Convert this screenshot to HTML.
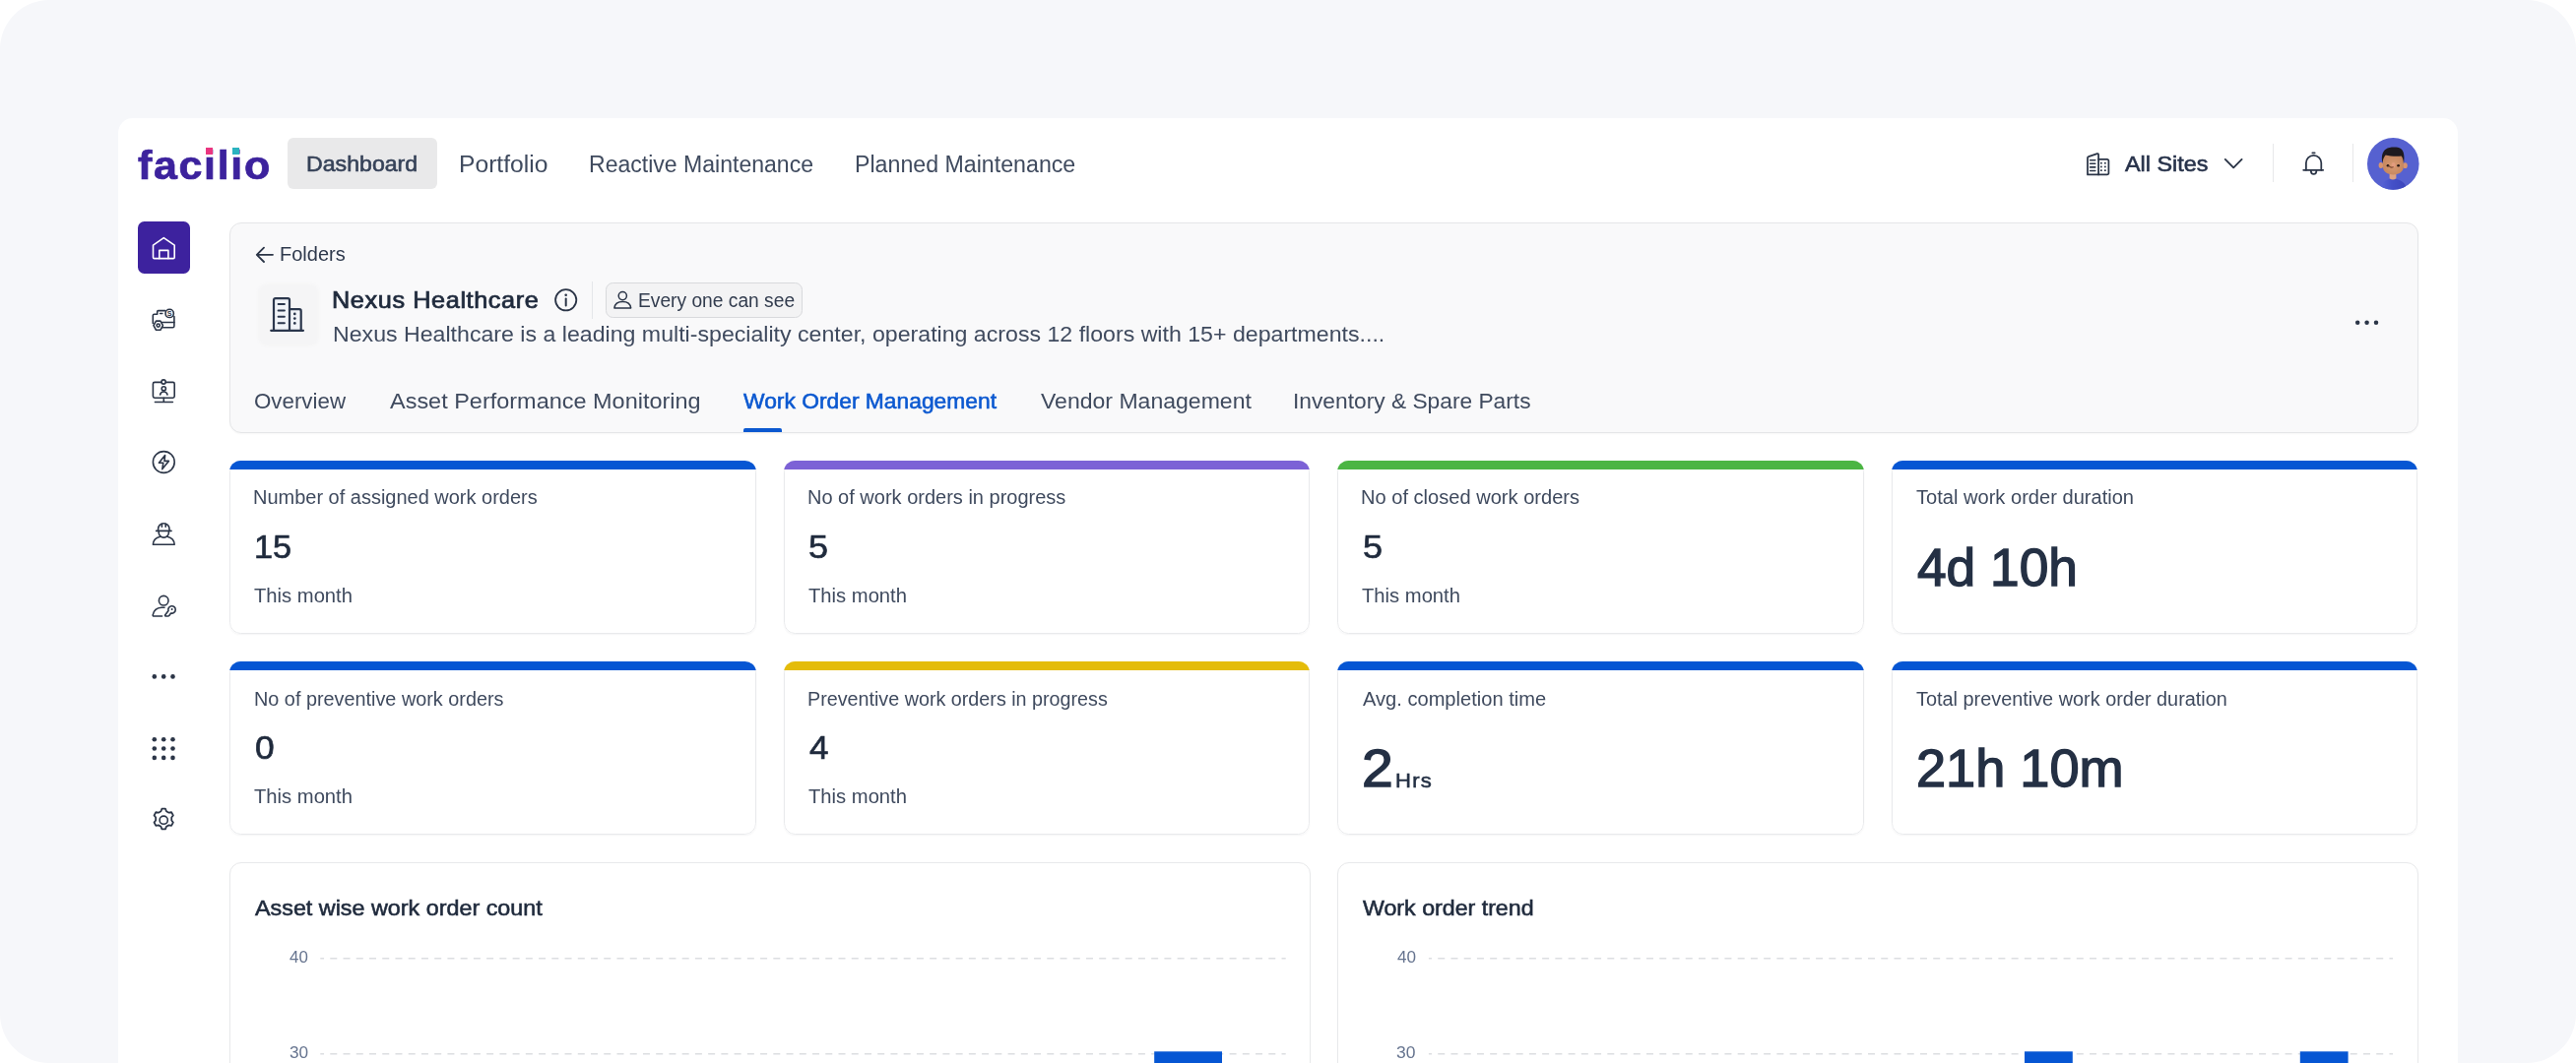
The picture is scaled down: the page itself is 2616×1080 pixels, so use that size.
<!DOCTYPE html>
<html lang="en">
<head>
<meta charset="utf-8">
<title>Facilio – Nexus Healthcare – Work Order Management</title>
<style>
html,body{margin:0;padding:0;background:#ffffff;}
body{width:2616px;height:1080px;overflow:hidden;position:relative;font-family:"Liberation Sans",Arial,sans-serif;-webkit-font-smoothing:antialiased;}
#frame{position:absolute;left:0;top:0;width:2616px;height:1080px;border-radius:50px;background:#f6f7fa;overflow:hidden;}
#panel{position:absolute;left:120px;top:120px;width:2376px;height:1000px;background:#ffffff;border-radius:15px 15px 0 0;}
header,nav,aside,main,section,article{display:block;position:static;margin:0;padding:0;}
.t{position:absolute;white-space:nowrap;line-height:1;margin:0;padding:0;transform-origin:0 0;}
.abs{position:absolute;}
svg{position:absolute;overflow:visible;}
.ico{fill:none;stroke:#2b3547;stroke-width:1.7;stroke-linecap:round;stroke-linejoin:round;}
.kpi{position:absolute;width:534.5px;height:176.3px;background:#fff;border-radius:11.5px;box-shadow:0 1px 2px rgba(16,24,40,.045);overflow:hidden;}
.kpi:after{content:"";position:absolute;left:0;top:0;right:0;bottom:0;border:1px solid #e9eaec;border-radius:11.5px;}
.kpi i{position:absolute;left:0;top:0;right:0;height:9px;display:block;z-index:2;}
.chart{position:absolute;background:#fff;border:1px solid #e8e9eb;border-radius:12px;box-shadow:0 1px 2px rgba(16,24,40,.035);}
</style>
</head>
<body>
<div id="frame">
<div id="panel"></div>
<header>
<!-- ===== top navigation ===== -->
<div class="abs" style="left:292px;top:140px;width:151.5px;height:52px;border-radius:6px;background:#e9e9ea;"></div>
<!-- logo i-dots -->
<div class="abs" id="dot1" style="left:208.7px;top:149.6px;width:7.3px;height:7px;background:#ea3680;z-index:3;"></div>
<div class="abs" id="dot2" style="left:235.7px;top:149.6px;width:7.3px;height:7px;background:#2bb3c0;z-index:3;"></div>
<!-- all sites building icon -->
<svg style="left:2118px;top:153.5px;" width="25" height="25" viewBox="0 0 25 25">
 <g class="ico" style="stroke-width:1.75">
  <path d="M2 23.4 V6.4 a1.3 1.3 0 0 1 1 -1.3 L11.8 2.1 a1 1 0 0 1 1.3 1 V23.4 Z"/>
  <path d="M13.1 7.9 H21.9 a1.5 1.5 0 0 1 1.5 1.5 V21.9 a1.5 1.5 0 0 1 -1.5 1.5 H13.1"/>
  <path d="M4.6 8.7 h5.2 M4.6 12.3 h5.2 M4.6 15.9 h5.2 M4.6 19.5 h5.2" style="stroke-width:1.6"/>
 </g>
 <g fill="#2b3547"><rect x="15" y="10.9" width="1.7" height="1.7"/><rect x="19" y="10.9" width="1.7" height="1.7"/><rect x="15" y="14.6" width="1.7" height="1.7"/><rect x="19" y="14.6" width="1.7" height="1.7"/><rect x="15" y="18.3" width="1.7" height="1.7"/><rect x="19" y="18.3" width="1.7" height="1.7"/></g>
</svg>
<!-- chevron -->
<svg style="left:2258px;top:158px;" width="20" height="16" viewBox="0 0 20 16"><path class="ico" style="stroke-width:1.9" d="M1.8 3.9 L10.2 12.3 L18.6 3.9"/></svg>
<div class="abs" style="left:2308px;top:146px;width:1.4px;height:39px;background:#e7e8ea;"></div>
<!-- bell -->
<svg style="left:2338px;top:153px;" width="24" height="26" viewBox="0 0 24 26">
 <g class="ico" style="stroke-width:1.75">
  <path d="M3.9 19.8 V12.5 a7.7 7.7 0 0 1 15.4 0 V19.8"/>
  <path d="M1.2 19.8 H21.2"/>
  <path d="M8.8 20.4 a2.8 3.4 0 0 0 5.6 0"/>
  <path d="M10.3 2.3 h2.4"/>
 </g>
</svg>
<div class="abs" style="left:2389px;top:146px;width:1.4px;height:39px;background:#e7e8ea;"></div>
<!-- avatar -->
<svg style="left:2403.7px;top:139.6px;" width="53" height="53" viewBox="0 0 53 53">
 <defs><clipPath id="avc"><circle cx="26.3" cy="26.4" r="26.3"/></clipPath>
 <radialGradient id="avf" cx="0.5" cy="0.55" r="0.6"><stop offset="0" stop-color="#d79a72"/><stop offset="1" stop-color="#c4845c"/></radialGradient>
 <linearGradient id="avb" x1="0" y1="0" x2="1" y2="0"><stop offset="0" stop-color="#5a66d6"/><stop offset=".45" stop-color="#4450c8"/><stop offset="1" stop-color="#3b45ba"/></linearGradient></defs>
 <g clip-path="url(#avc)">
  <rect width="53" height="53" fill="#5661d0"/>
  <path d="M12.5 54 C13 46.5 18 42 26.2 41.6 C34.5 42 39.5 46.5 40.5 54 Z" fill="url(#avb)"/>
  <path d="M22.6 35 H29.4 V41.2 Q26 43.6 22.6 41.2 Z" fill="#dca283"/>
  <ellipse cx="13.9" cy="28" rx="2.3" ry="2.9" fill="#d8946f"/>
  <ellipse cx="38.5" cy="28.2" rx="2.3" ry="2.9" fill="#d8946f"/>
  <path d="M15.9 20 C16 15 36.6 15 36.8 20 L36.8 29 C36.8 34.6 32.4 37.4 26.4 37.4 C20.4 37.4 15.9 34.6 15.9 29 Z" fill="url(#avf)"/>
  <path d="M15.4 25.8 C14.2 19.5 15 14 19 11.4 C22.5 9.2 30.5 8.8 34 11 C37.6 13.4 38 19.5 37 25.8 C36.6 22.4 36 20.2 34.6 18.6 C29 19.2 22.6 18.6 18.6 17.4 C16.8 19.4 15.9 22.2 15.4 25.8 Z" fill="#1e1a1f"/>
  <ellipse cx="21" cy="28.2" rx="1.35" ry="1.25" fill="#2a1a16"/>
  <ellipse cx="31.6" cy="28.2" rx="1.35" ry="1.25" fill="#2a1a16"/>
  <ellipse cx="26.6" cy="27.6" rx="2" ry="2.6" fill="#e39c7e"/>
  <path d="M22 28.6 q2 2.4 4.2 1.2" stroke="#7c4630" stroke-width="1.2" fill="none" stroke-linecap="round"/>
 </g>
</svg>
<div class="t" id="logo" style="left:139.60px;top:147.56px;font-size:41px;font-weight:700;-webkit-text-stroke:0.74px currentColor;color:#3c229d;letter-spacing:1.60px;transform:scaleX(1.0478);">facilio</div>
<nav>
<div class="t" id="nav1" style="left:310.56px;top:155.86px;font-size:22.2px;font-weight:400;-webkit-text-stroke:0.58px currentColor;color:#364258;transform:scaleX(1.0428);">Dashboard</div>
<div class="t" id="nav2" style="left:465.62px;top:155.88px;font-size:23px;font-weight:400;color:#3f4a5e;transform:scaleX(1.0713);">Portfolio</div>
<div class="t" id="nav3" style="left:598.40px;top:155.88px;font-size:23px;font-weight:400;color:#3f4a5e;transform:scaleX(1.0020);">Reactive Maintenance</div>
<div class="t" id="nav4" style="left:868.38px;top:155.88px;font-size:23px;font-weight:400;color:#3f4a5e;transform:scaleX(1.0079);">Planned Maintenance</div>
</nav>
<div class="t" id="sites" style="left:2157.59px;top:155.98px;font-size:22px;font-weight:400;-webkit-text-stroke:0.57px currentColor;color:#27324a;transform:scaleX(1.0635);">All Sites</div>
</header>
<aside>
<!-- ===== sidebar ===== -->
<div class="abs" style="left:139.7px;top:225.2px;width:53px;height:52.8px;border-radius:6.5px;background:#3d229e;"></div>
<!-- home -->
<svg style="left:154px;top:240px;" width="25" height="25" viewBox="0 0 25 25">
 <g class="ico" style="stroke:#ffffff;stroke-width:1.6">
  <path d="M1.5 9.2 L12.3 1.6 L23.2 9.2 V21.4 a1.2 1.2 0 0 1 -1.2 1.2 H2.7 a1.2 1.2 0 0 1 -1.2 -1.2 Z"/>
  <path d="M7.8 22.6 V14.4 h9.1 V22.6"/>
 </g>
</svg>
<!-- asset cost -->
<svg style="left:154px;top:312px;" width="25" height="25" viewBox="0 0 25 25">
 <g class="ico" style="stroke-width:1.6">
  <path d="M13.9 3.65 H6.7 a1 1 0 0 0 -1 1 V7.2 H2.7 a1.4 1.4 0 0 0 -1.4 1.4 V16.4"/>
  <path d="M22.9 9.6 V19.3 a1.45 1.45 0 0 1 -1.45 1.45 H10.6"/>
  <path d="M10.2 15.5 H22.9"/>
  <path d="M8.5 6.5 h2.4" style="stroke-width:1.3"/>
  <circle cx="18.2" cy="6.4" r="4.15"/>
  <path d="M4.5 14.1 h4.4 l2.55 4.5 -2.55 4.7 h-4.4 l-2.55 -4.7 Z"/>
  <circle cx="6.7" cy="18.6" r="1.6"/>
 </g>
 <text x="18.2" y="9" text-anchor="middle" font-family="Liberation Sans, sans-serif" font-size="7.2" font-weight="700" fill="#2b3547">S</text>
</svg>
<!-- monitor person -->
<svg style="left:154px;top:384.5px;" width="25" height="25" viewBox="0 0 25 25">
 <g class="ico" style="stroke-width:1.6">
  <path d="M9.6 3.4 H3 a1.6 1.6 0 0 0 -1.6 1.6 V17.6 a1.6 1.6 0 0 0 1.6 1.6 H21.6 a1.6 1.6 0 0 0 1.6 -1.6 V5 a1.6 1.6 0 0 0 -1.6 -1.6 H14.6"/>
  <circle cx="12.1" cy="3" r="2.1"/>
  <circle cx="12.3" cy="9.8" r="2.1"/>
  <path d="M8.6 16 a3.8 3.8 0 0 1 7.4 0"/>
  <path d="M12.3 19.2 V23.3"/>
  <path d="M3.4 23.5 H21.4"/>
 </g>
</svg>
<!-- bolt -->
<svg style="left:154px;top:457px;" width="25" height="25" viewBox="0 0 25 25">
 <g class="ico" style="stroke-width:1.6">
  <circle cx="12.3" cy="12.5" r="10.9"/>
  <path d="M13.6 5.6 L7.4 13.2 H11.8 L10.8 19.6 L17.4 11.4 H13 Z"/>
 </g>
</svg>
<!-- worker -->
<svg style="left:154px;top:530px;" width="25" height="25" viewBox="0 0 25 25">
 <g class="ico" style="stroke-width:1.6">
  <path d="M6.6 9.2 V7.4 a5.7 5.7 0 0 1 11.4 0 V9.2"/>
  <path d="M10.4 2.4 V5.2 M14.2 2.4 V5.2"/>
  <path d="M4.6 9.4 H20"/>
  <path d="M7.2 9.8 V11 a5.1 5.1 0 0 0 10.2 0 V9.8"/>
  <path d="M8.6 15.2 C4.4 16.2 1.6 19 1.4 23.2 H23.2 C23 19 20.2 16.2 16 15.2"/>
 </g>
</svg>
<!-- user key -->
<svg style="left:154px;top:603.5px;" width="25" height="25" viewBox="0 0 25 25">
 <g class="ico" style="stroke-width:1.6">
  <circle cx="12.2" cy="6.2" r="4.8"/>
  <path d="M10.6 22 H2.2 a1 1 0 0 1 -1 -1.2 C2 16.4 5.4 13.4 10 13.2 H13"/>
  <path d="M13.6 21 L17 16.6 a3.7 3.7 0 1 1 2.6 2.4 L17.8 21.4 a1.4 1.4 0 0 1 -1.2 .6 H14.2 a.8 .8 0 0 1 -.6 -1 Z"/>
 </g>
 <circle cx="20.6" cy="15" r="1" fill="#2b3547"/>
</svg>
<!-- more dots -->
<svg style="left:154px;top:675px;" width="25" height="25" viewBox="0 0 25 25">
 <g fill="#2b3547"><circle cx="2.8" cy="12.4" r="2.3"/><circle cx="12.2" cy="12.4" r="2.3"/><circle cx="21.5" cy="12.4" r="2.3"/></g>
</svg>
<!-- app grid -->
<svg style="left:154px;top:747.5px;" width="25" height="25" viewBox="0 0 25 25">
 <g fill="#2b3547">
  <circle cx="2.8" cy="3.3" r="2.3"/><circle cx="12.2" cy="3.3" r="2.3"/><circle cx="21.5" cy="3.3" r="2.3"/>
  <circle cx="2.8" cy="12.5" r="2.3"/><circle cx="12.2" cy="12.5" r="2.3"/><circle cx="21.5" cy="12.5" r="2.3"/>
  <circle cx="2.8" cy="21.9" r="2.3"/><circle cx="12.2" cy="21.9" r="2.3"/><circle cx="21.5" cy="21.9" r="2.3"/>
 </g>
</svg>
<!-- settings gear -->
<svg style="left:154px;top:820.5px;" width="25" height="25" viewBox="0 0 25 25">
 <g class="ico" style="stroke-width:1.6">
  <path transform="translate(12.2 12.2) scale(1.1 1.12) translate(-12.2 -12.2)" d="M10.6 1.9 h3.2 l.9 2.3 2.3 1.3 2.4 -.4 1.6 2.8 -1.5 1.9 v2.7 l1.5 1.9 -1.6 2.8 -2.4 -.4 -2.3 1.3 -.9 2.3 h-3.2 l-.9 -2.3 -2.3 -1.3 -2.4 .4 -1.6 -2.8 1.5 -1.9 v-2.7 l-1.5 -1.9 1.6 -2.8 2.4 .4 2.3 -1.3 Z"/>
  <circle cx="12.2" cy="12.2" r="4.1"/>
 </g>
</svg>
</aside>
<main>
<section id="folder">
<!-- ===== folder header card ===== -->
<div class="abs" style="left:233px;top:226px;width:2221px;height:212px;border:1px solid #e5e6e8;border-radius:12px;background:#f9f9fa;box-shadow:0 1px 2px rgba(16,24,40,.035);"></div>
<!-- back arrow -->
<svg style="left:259px;top:249px;" width="20" height="20" viewBox="0 0 20 20"><path class="ico" style="stroke-width:1.8" d="M18 9.8 H2 M9 2.6 L1.8 9.8 L9 17"/></svg>
<!-- icon tile -->
<div class="abs" style="left:261.5px;top:288px;width:62px;height:63.5px;border-radius:9px;background:#f5f5f6;filter:blur(1.2px);"></div>
<svg style="left:272px;top:300px;" width="40" height="40" viewBox="0 0 40 40">
 <path d="M6 35.8 V4.6 a1.5 1.5 0 0 1 1.5 -1.5 H20.5 a1.5 1.5 0 0 1 1.5 1.5 V35.8 Z" fill="#f0f3f8"/>
 <path d="M22 14.2 H32 a1.7 1.7 0 0 1 1.7 1.7 V35.8 H22 Z" fill="#f0f3f8"/>
 <g class="ico" style="stroke-width:2.2;stroke:#2a364c">
  <path d="M6 35.8 V4.8 a1.7 1.7 0 0 1 1.7 -1.7 H20.3 a1.7 1.7 0 0 1 1.7 1.7 V35.8"/>
  <path d="M22 14.2 H32 a1.7 1.7 0 0 1 1.7 1.7 V35.8"/>
  <path d="M3.2 35.8 H36"/>
  <path d="M10.6 9 h6.3 M10.6 15.4 h6.3 M10.6 21.8 h6.3 M10.6 28.2 h6.3" style="stroke-width:2"/>
 </g>
 <g fill="#2a364c"><circle cx="27.3" cy="18.9" r="1.35"/><circle cx="27.3" cy="23.6" r="1.35"/><circle cx="27.3" cy="28.4" r="1.35"/></g>
</svg>
<!-- info icon -->
<svg style="left:562px;top:292px;" width="26" height="26" viewBox="0 0 26 26">
 <circle class="ico" style="stroke-width:1.8" cx="12.7" cy="12.8" r="10.6"/>
 <path class="ico" style="stroke-width:2" d="M12.7 11.6 V18.4"/>
 <circle cx="12.7" cy="7.7" r="1.3" fill="#2b3547"/>
</svg>
<div class="abs" style="left:601.2px;top:285.8px;width:1.3px;height:38px;background:#e4e6e9;"></div>
<!-- visibility badge -->
<div class="abs" style="left:615px;top:287px;width:198px;height:33.6px;border:1.2px solid #d8d9dc;border-radius:7.5px;background:#f3f3f4;"></div>
<svg style="left:622px;top:295px;" width="21" height="20" viewBox="0 0 21 20">
 <g class="ico" style="stroke-width:1.5">
  <circle cx="10.3" cy="5.6" r="4.1"/>
  <path d="M1.9 17.9 C2.4 13.6 5.8 11.4 10.3 11.4 C14.8 11.4 18.2 13.6 18.7 17.9 Z"/>
 </g>
</svg>
<!-- more (…) -->
<svg style="left:2390px;top:322px;" width="28" height="12" viewBox="0 0 28 12"><g fill="#2b3547"><circle cx="4.2" cy="5.8" r="2.25"/><circle cx="13.6" cy="5.8" r="2.25"/><circle cx="23" cy="5.8" r="2.25"/></g></svg>
<!-- active tab underline -->
<div class="abs" style="left:755px;top:435px;width:39px;height:4px;border-radius:2px 2px 0 0;background:#0b58d0;"></div>
<div class="t" id="back" style="left:283.59px;top:249.49px;font-size:19.5px;font-weight:400;color:#2e394c;transform:scaleX(1.0258);">Folders</div>
<div class="t" id="title" style="left:337.49px;top:293.79px;font-size:23.2px;font-weight:400;-webkit-text-stroke:0.74px currentColor;color:#1f2a3c;letter-spacing:0.55px;transform:scaleX(1.0897);">Nexus Healthcare</div>
<div class="t" id="badge" style="left:647.72px;top:296.04px;font-size:19.5px;font-weight:400;color:#323c4e;transform:scaleX(0.9848);">Every one can see</div>
<div class="t" id="desc" style="left:337.71px;top:328.88px;font-size:22px;font-weight:400;color:#3f4a5e;transform:scaleX(1.0519);">Nexus Healthcare is a leading multi-speciality center, operating across 12 floors with 15+ departments....</div>
<nav>
<div class="t" id="tab1" style="left:258.04px;top:397.38px;font-size:22px;font-weight:400;color:#3f4a5e;transform:scaleX(1.0145);">Overview</div>
<div class="t" id="tab2" style="left:395.81px;top:397.38px;font-size:22px;font-weight:400;color:#3f4a5e;transform:scaleX(1.0665);">Asset Performance Monitoring</div>
<div class="t" id="tab3" style="left:755.06px;top:397.25px;font-size:21.2px;font-weight:400;-webkit-text-stroke:0.55px currentColor;color:#0b58d0;transform:scaleX(1.0770);">Work Order Management</div>
<div class="t" id="tab4" style="left:1057.05px;top:397.38px;font-size:22px;font-weight:400;color:#3f4a5e;transform:scaleX(1.0470);">Vendor Management</div>
<div class="t" id="tab5" style="left:1313.35px;top:397.38px;font-size:22px;font-weight:400;color:#3f4a5e;transform:scaleX(1.0342);">Inventory &amp; Spare Parts</div>
</nav>
</section>
<section id="kpis">
<article>
<div class="kpi" style="left:233px;top:467.5px;"><i style="background:#0656d3"></i></div>
<div class="t" id="k00t" style="left:257.33px;top:495.99px;font-size:19.5px;font-weight:400;color:#3f4a5e;transform:scaleX(1.0244);">Number of assigned work orders</div>
<div class="t" id="k00n" style="left:257.89px;top:539.70px;font-size:32.9px;font-weight:400;-webkit-text-stroke:0.63px currentColor;color:#1f2a3c;transform:scaleX(1.0443);">15</div>
<div class="t" id="k00s" style="left:258.39px;top:595.74px;font-size:19.8px;font-weight:400;color:#3f4a5e;transform:scaleX(1.0216);">This month</div>
</article>
<article>
<div class="kpi" style="left:795.5px;top:467.5px;"><i style="background:#7c62d6"></i></div>
<div class="t" id="k01t" style="left:820.20px;top:495.99px;font-size:19.5px;font-weight:400;color:#3f4a5e;transform:scaleX(1.0257);">No of work orders in progress</div>
<div class="t" id="k01n" style="left:821.49px;top:539.74px;font-size:32.9px;font-weight:400;-webkit-text-stroke:0.63px currentColor;color:#1f2a3c;transform:scaleX(1.0949);">5</div>
<div class="t" id="k01s" style="left:821.35px;top:595.74px;font-size:19.8px;font-weight:400;color:#3f4a5e;transform:scaleX(1.0217);">This month</div>
</article>
<article>
<div class="kpi" style="left:1358px;top:467.5px;"><i style="background:#4bb543"></i></div>
<div class="t" id="k02t" style="left:1382.33px;top:496.49px;font-size:19.5px;font-weight:400;color:#3f4a5e;transform:scaleX(1.0297);">No of closed work orders</div>
<div class="t" id="k02n" style="left:1383.54px;top:539.75px;font-size:32.9px;font-weight:400;-webkit-text-stroke:0.63px currentColor;color:#1f2a3c;transform:scaleX(1.0967);">5</div>
<div class="t" id="k02s" style="left:1383.39px;top:595.74px;font-size:19.8px;font-weight:400;color:#3f4a5e;transform:scaleX(1.0216);">This month</div>
</article>
<article>
<div class="kpi" style="left:1920.5px;top:467.5px;"><i style="background:#0656d3"></i></div>
<div class="t" id="k03t" style="left:1946.21px;top:496.49px;font-size:19.5px;font-weight:400;color:#3f4a5e;transform:scaleX(1.0300);">Total work order duration</div>
<div class="t" id="k03n" style="left:1946.51px;top:550.21px;font-size:53.5px;font-weight:400;-webkit-text-stroke:1.39px currentColor;color:#243044;transform:scaleX(0.9956);">4d 10h</div>
</article>
<article>
<div class="kpi" style="left:233px;top:672px;"><i style="background:#0656d3"></i></div>
<div class="t" id="k10t" style="left:257.82px;top:701.49px;font-size:19.5px;font-weight:400;color:#3f4a5e;transform:scaleX(1.0169);">No of preventive work orders</div>
<div class="t" id="k10n" style="left:258.65px;top:743.88px;font-size:32.9px;font-weight:400;-webkit-text-stroke:0.63px currentColor;color:#1f2a3c;transform:scaleX(1.0754);">0</div>
<div class="t" id="k10s" style="left:258.39px;top:799.99px;font-size:19.8px;font-weight:400;color:#3f4a5e;transform:scaleX(1.0216);">This month</div>
</article>
<article>
<div class="kpi" style="left:795.5px;top:672px;"><i style="background:#e4bc0a"></i></div>
<div class="t" id="k11t" style="left:820.47px;top:701.49px;font-size:19.5px;font-weight:400;color:#3f4a5e;transform:scaleX(1.0117);">Preventive work orders in progress</div>
<div class="t" id="k11n" style="left:822.42px;top:743.95px;font-size:32.9px;font-weight:400;-webkit-text-stroke:0.63px currentColor;color:#1f2a3c;transform:scaleX(1.0655);">4</div>
<div class="t" id="k11s" style="left:821.35px;top:799.99px;font-size:19.8px;font-weight:400;color:#3f4a5e;transform:scaleX(1.0217);">This month</div>
</article>
<article>
<div class="kpi" style="left:1358px;top:672px;"><i style="background:#0656d3"></i></div>
<div class="t" id="k12t" style="left:1384.03px;top:701.49px;font-size:19.5px;font-weight:400;color:#3f4a5e;transform:scaleX(1.0301);">Avg. completion time</div>
<div class="t" id="k12n" style="left:1382.83px;top:754.19px;font-size:53.5px;font-weight:400;-webkit-text-stroke:1.39px currentColor;color:#243044;transform:scaleX(1.0681);">2</div>
<div class="t" id="k12u" style="left:1417.37px;top:783.23px;font-size:20.4px;font-weight:400;-webkit-text-stroke:0.53px currentColor;color:#243044;letter-spacing:1.20px;transform:scaleX(1.0811);">Hrs</div>
</article>
<article>
<div class="kpi" style="left:1920.5px;top:672px;"><i style="background:#0656d3"></i></div>
<div class="t" id="k13t" style="left:1946.35px;top:701.49px;font-size:19.5px;font-weight:400;color:#3f4a5e;transform:scaleX(1.0190);">Total preventive work order duration</div>
<div class="t" id="k13n" style="left:1945.71px;top:753.50px;font-size:53.5px;font-weight:400;-webkit-text-stroke:1.39px currentColor;color:#243044;transform:scaleX(1.0117);">21h 10m</div>
</article>
</section>
<section id="charts">
<!-- ===== chart cards ===== -->
<div class="chart" style="left:232.5px;top:876.3px;width:1096.5px;height:240px;"></div>
<div class="chart" style="left:1358px;top:876.3px;width:1096px;height:240px;"></div>
<svg style="left:0;top:960px;" width="2616" height="120" viewBox="0 960 2616 120">
 <g stroke="#dcdee1" stroke-width="1.6" stroke-dasharray="7 6.236" fill="none">
  <path d="M325.3 973.8 H1305.7" stroke-dashoffset="3.24"/>
  <path d="M325.3 1070.8 H1305.7" stroke-dashoffset="3.24"/>
  <path d="M1450.9 973.8 H2430" stroke-dashoffset="3.9"/>
  <path d="M1450.9 1070.8 H2430" stroke-dashoffset="3.9"/>
 </g>
 <g fill="#0656d3">
  <rect x="1172.2" y="1068.3" width="68.8" height="20"/>
  <rect x="2056" y="1068.3" width="48.8" height="20"/>
  <rect x="2335.8" y="1068.3" width="48.8" height="20"/>
 </g>
</svg>
<div class="t" id="c1t" style="left:259.32px;top:912.13px;font-size:22px;font-weight:400;-webkit-text-stroke:0.57px currentColor;color:#1f2a3c;transform:scaleX(1.0604);">Asset wise work order count</div>
<div class="t" id="c1a40" style="left:293.66px;top:965.19px;font-size:15.6px;font-weight:400;color:#66748f;transform:scaleX(1.0826);">40</div>
<div class="t" id="c1a30" style="left:293.54px;top:1062.09px;font-size:15.6px;font-weight:400;color:#66748f;transform:scaleX(1.1034);">30</div>
<div class="t" id="c2t" style="left:1384.37px;top:912.13px;font-size:22px;font-weight:400;-webkit-text-stroke:0.57px currentColor;color:#1f2a3c;transform:scaleX(1.0541);">Work order trend</div>
<div class="t" id="c2a40" style="left:1418.62px;top:965.19px;font-size:15.6px;font-weight:400;color:#66748f;transform:scaleX(1.0991);">40</div>
<div class="t" id="c2a30" style="left:1418.06px;top:1062.09px;font-size:15.6px;font-weight:400;color:#66748f;transform:scaleX(1.1216);">30</div>
</section>
</main>
</div>
</body>
</html>
